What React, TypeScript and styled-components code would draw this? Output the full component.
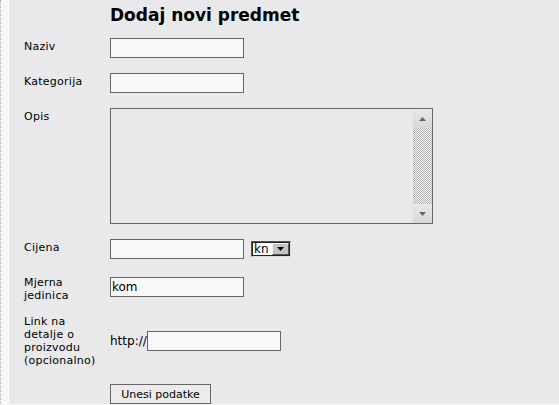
import React from "react";
import styled, { createGlobalStyle } from "styled-components";

const Global = createGlobalStyle`
  html, body { margin: 0; padding: 0; overflow: hidden; }
  body { background: #f4f4f4; font-family: "DejaVu Sans", Verdana, sans-serif; }
  #root { height: 405px; }
`;

const Page = styled.div`
  display: flex;
  height: 404px;
`;

const SideStrip = styled.div`
  width: 8px;
  flex: none;
  background: #f7f7f7;
  border-left: 1px dotted #a8a8a8;
`;

const Main = styled.main`
  flex: 1;
  background: #e9e9eb;
  padding: 5px 0 0 15px;
  display: flex;
  flex-direction: column;
`;

const Heading = styled.h1`
  margin: 0 0 13px 86px;
  font-family: "DejaVu Sans", Verdana, sans-serif;
  font-weight: bold;
  font-size: 17px;
  line-height: 20px;
  color: #000;
`;

const Row = styled.div<{ $gap: number; $align?: string }>`
  display: flex;
  align-items: ${(p) => p.$align || "flex-start"};
  margin-top: ${(p) => p.$gap}px;
`;

const Label = styled.div<{ $pt?: number }>`
  width: 86px;
  flex: none;
  font-size: 11px;
  line-height: 13px;
  letter-spacing: 0.25px;
  color: #000;
  padding-top: ${(p) => p.$pt ?? 1}px;
`;

const Field = styled.div<{ $mt?: number }>`
  display: flex;
  align-items: center;
  margin-top: ${(p) => p.$mt ?? 0}px;
`;

const TextInput = styled.input`
  box-sizing: border-box;
  width: 134px;
  height: 20px;
  margin: 0;
  padding: 0 1px;
  border: 1px solid #666;
  background: #f8f8f8;
  font-family: "DejaVu Sans", Verdana, sans-serif;
  font-size: 12px;
  color: #000;
  outline: none;
`;

const AreaBox = styled.div`
  box-sizing: border-box;
  width: 323px;
  height: 116px;
  border: 1px solid #666;
  display: flex;
  background: #e9e9eb;
`;

const Area = styled.textarea`
  flex: 1;
  border: none;
  margin: 0;
  padding: 2px;
  background: transparent;
  resize: none;
  outline: none;
  font-family: "DejaVu Sans", Verdana, sans-serif;
  font-size: 12px;
`;

const ScrollBar = styled.div`
  width: 19px;
  display: flex;
  flex-direction: column;
`;

const ScrollButton = styled.div`
  height: 19px;
  flex: none;
  background: linear-gradient(#e8e8e8, #d8d8d8);
  display: flex;
  align-items: center;
  justify-content: center;
`;

const Track = styled.div`
  flex: 1;
  background: repeating-conic-gradient(#b4b4b4 0 25%, #f0f0f0 0 50%) 0 0 / 2px 2px;
`;

const Currency = styled.div`
  margin-left: 7px;
  box-sizing: border-box;
  width: 40px;
  height: 16px;
  border: 1px solid;
  border-color: #555 #ddd #ddd #555;
  outline: 1px solid #222;
  outline-offset: -2px;
  background: #fff;
  display: flex;
  align-items: stretch;
  font-size: 12px;
  line-height: 14px;
  color: #000;
`;

const CurrencyValue = styled.span`
  flex: 1;
  padding-left: 2px;
`;

const CurrencyArrow = styled.span`
  width: 17px;
  margin: 1px 1px 1px 0;
  background: #c4c4c4;
  border: 1px solid;
  border-color: #f4f4f4 #555 #555 #f4f4f4;
  box-sizing: border-box;
  display: flex;
  align-items: center;
  justify-content: center;
`;

const Prefix = styled.span`
  font-size: 12px;
  color: #000;
`;

const SubmitButton = styled.button`
  box-sizing: border-box;
  margin: 0 0 0 86px;
  height: 20px;
  width: 101px;
  padding: 0;
  border: 1px solid #666;
  background: #ececec;
  font-family: "DejaVu Sans", Verdana, sans-serif;
  font-size: 11px;
  color: #000;
  align-self: flex-start;
`;

const Tri = ({ up, color = "#666" }: { up?: boolean; color?: string }) => (
  <svg width="7" height="4" viewBox="0 0 7 4">
    <path d={up ? "M0 4 L3.5 0 L7 4 Z" : "M0 0 L7 0 L3.5 4 Z"} fill={color} />
  </svg>
);

export default function App() {
  return (
    <>
      <Global />
      <Page>
        <SideStrip />
        <Main>
          <Heading>Dodaj novi predmet</Heading>
          <Row $gap={0}>
            <Label $pt={2}>Naziv</Label>
            <Field>
              <TextInput />
            </Field>
          </Row>
          <Row $gap={15}>
            <Label $pt={2}>Kategorija</Label>
            <Field>
              <TextInput />
            </Field>
          </Row>
          <Row $gap={15}>
            <Label $pt={2}>Opis</Label>
            <AreaBox>
              <Area />
              <ScrollBar>
                <ScrollButton>
                  <Tri up />
                </ScrollButton>
                <Track />
                <ScrollButton>
                  <Tri />
                </ScrollButton>
              </ScrollBar>
            </AreaBox>
          </Row>
          <Row $gap={15}>
            <Label $pt={2}>Cijena</Label>
            <Field>
              <TextInput />
              <Currency>
                <CurrencyValue>kn</CurrencyValue>
                <CurrencyArrow>
                  <Tri color="#000" />
                </CurrencyArrow>
              </Currency>
            </Field>
          </Row>
          <Row $gap={17}>
            <Label $pt={0}>
              Mjerna
              <br />
              jedinica
            </Label>
            <Field $mt={1}>
              <TextInput defaultValue="kom" />
            </Field>
          </Row>
          <Row $gap={13} $align="center">
            <Label $pt={0}>
              Link na
              <br />
              detalje o
              <br />
              proizvodu
              <br />
              (opcionalno)
            </Label>
            <Field>
              <Prefix>http://</Prefix>
              <TextInput />
            </Field>
          </Row>
          <Row $gap={17}>
            <SubmitButton>Unesi podatke</SubmitButton>
          </Row>
        </Main>
      </Page>
    </>
  );
}
